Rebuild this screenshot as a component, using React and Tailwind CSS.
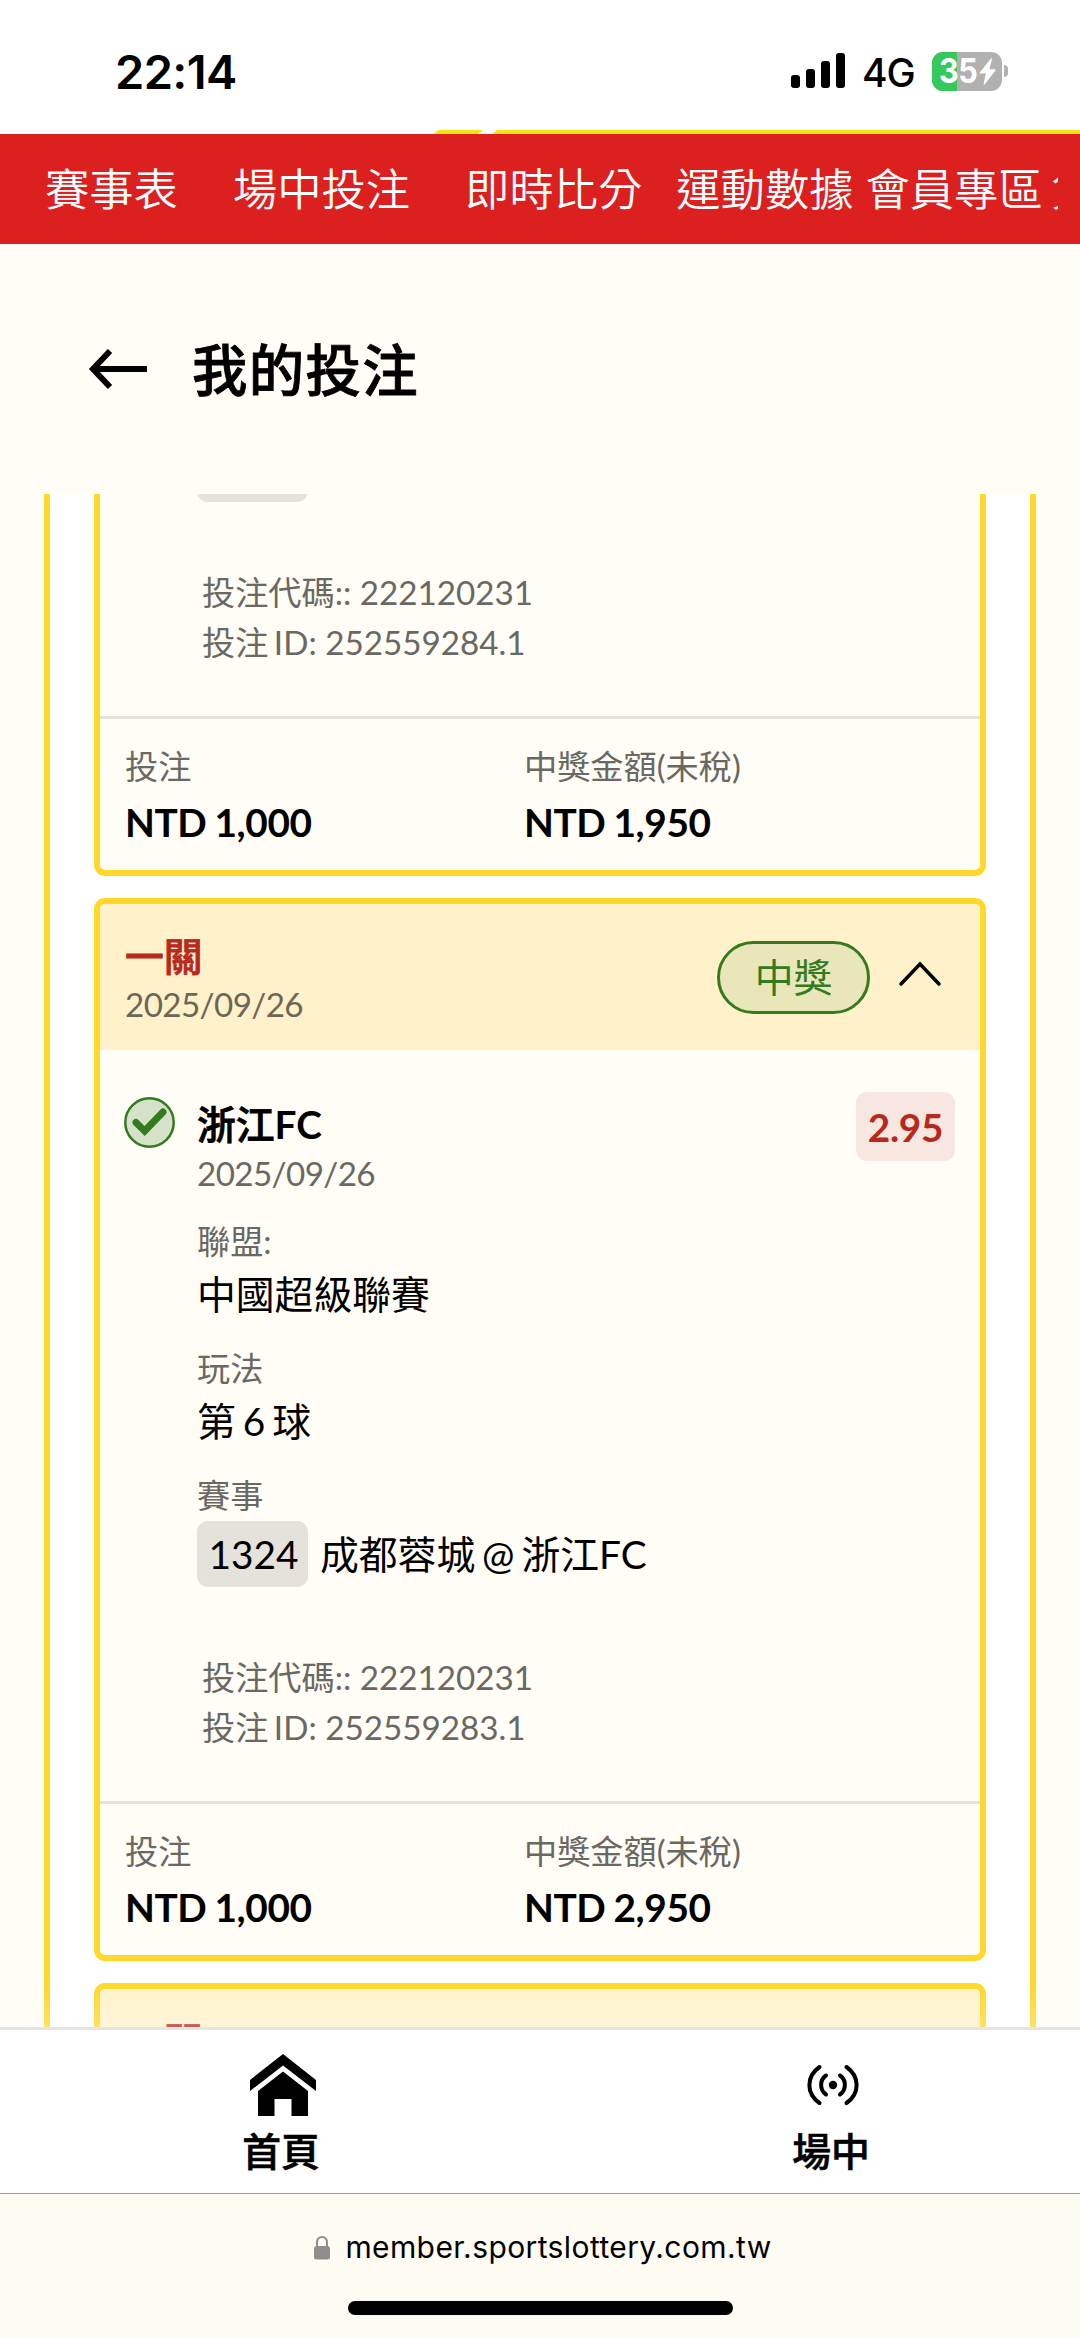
import React from "react";

const navItems = [
  { label: "賽事表", className: "mr-[55px]" },
  { label: "場中投注", className: "mr-[55px]" },
  { label: "即時比分", className: "mr-[34px]" },
  { label: "運動數據", className: "mr-3" },
  { label: "會員專區", className: "mr-2" },
  { label: "負責任", className: "" },
];

function StatusBar() {
  return (
    <div className="relative h-[134px] shrink-0 bg-white font-[Inter,sans-serif]">
      <div className="flex h-[134px] items-start justify-between pl-[115px] pr-[72px]">
        <span className="mt-[44px] text-[47px] leading-[56px] font-semibold tracking-[-0.6px]">22:14</span>
        <div className="mt-[50px] flex h-[42px] items-center">
          <svg width="54" height="36" viewBox="0 0 54 36">
            <rect x="0" y="22" width="9" height="13" rx="3" />
            <rect x="15" y="16" width="9" height="19" rx="3" />
            <rect x="30" y="8" width="9" height="27" rx="3" />
            <rect x="45" y="0" width="9" height="35" rx="3" />
          </svg>
          <span className="mt-1 ml-[17px] w-[70px] text-[39px] leading-[42px] font-medium tracking-[-1px]">4G</span>
          <div className="relative flex h-[39px] w-[70px] items-center overflow-hidden rounded-[11px] bg-[#b1b1b1]">
            <div className="absolute inset-y-0 left-0 w-[25px] bg-[#36c85b]" />
            <span className="relative ml-[7px] w-10 origin-left scale-x-90 text-[34px] leading-[38px] font-bold tracking-[-0.5px] text-white">
              35
            </span>
            <svg className="relative" width="17" height="27" viewBox="0 0 17 27" fill="#fff">
              <path d="M12 0.5 0.8 14.4c-.5.7-.2 1.2.6 1.2h5.4L4.6 26c-.2.8.5 1 1 .4L16.4 12.600c.5-.7.2-1.300-.6-1.300h-5.400L13 1.200C13.200.3 12.500-.1 12 .5Z" />
            </svg>
          </div>
          <div className="ml-0.5 h-3 w-1 rounded-r-full bg-[#b1b1b1]" />
        </div>
      </div>
      {/* bottom edge of the site banner */}
      <svg className="absolute bottom-0 left-[432px]" width="648" height="4" viewBox="0 0 648 4" fill="#fde011">
        <path d="M7 0H51L46 4H1Z" />
        <path d="M65 0H648V4H60Z" />
      </svg>
    </div>
  );
}

function TopNav() {
  return (
    <nav className="flex h-[110px] shrink-0 items-center bg-[#dc1f1f] px-[22px]">
      <div className="flex flex-1 overflow-hidden pl-[23px]">
        {navItems.map((item) => (
          <a
            key={item.label}
            className={`shrink-0 text-[44.3px] leading-[66px] font-[350] whitespace-nowrap text-white ${item.className}`}
          >
            {item.label}
          </a>
        ))}
      </div>
    </nav>
  );
}

function PageTitle() {
  return (
    <header className="flex h-[250px] shrink-0 items-center pl-[88px]">
      <svg width="60" height="42" viewBox="0 0 60 42" fill="none" stroke="#000" strokeWidth="6">
        <path d="M59 21H5M22 3 5 21 22 39" />
      </svg>
      <h1 className="mt-0.5 ml-[44px] text-[55.4px] leading-[80px] font-medium tracking-[1.4px] [-webkit-text-stroke:0.8px_#000]">
        我的投注
      </h1>
    </header>
  );
}

function BetMeta({ code, id }) {
  return (
    <div className="mb-[49px] pl-[102px] text-[33.2px] text-[#696863]">
      <p className="h-[50px] leading-[50px]">投注代碼:: {code}</p>
      <p className="h-[50px] leading-[50px]">
        <span className="[word-spacing:-3px]">投注 ID:</span> {id}
      </p>
    </div>
  );
}

function Amount({ label, value, className }) {
  return (
    <div className={className}>
      <p className="h-[53px] text-[33.2px] leading-[50px] text-[#696863]">{label}</p>
      <p className="h-14 text-[38.8px] leading-[56px] font-bold tracking-[-0.4px] [word-spacing:-1px]">{value}</p>
    </div>
  );
}

function BetFooter({ stake, payout }) {
  return (
    <div className="flex h-[154px] border-t-[3px] border-[#e5e2dc] px-[25px] pt-[22px]">
      <Amount label="投注" value={stake} className="w-[399px]" />
      <Amount label="中獎金額(未稅)" value={payout} className="" />
    </div>
  );
}

function Field({ label, children }) {
  return (
    <div className="mb-[21px]">
      <p className="h-[50px] text-[33.2px] leading-[50px] text-[#696863]">{label}</p>
      <div className="h-14 text-[38.8px] leading-[56px] [word-spacing:-3px]">{children}</div>
    </div>
  );
}

function CheckBadge() {
  return (
    <svg className="mt-[47px] shrink-0" width="51" height="51" viewBox="0 0 51 51">
      <circle cx="25.500" cy="25.500" r="24.200" fill="#d6e1c9" stroke="#347a1f" strokeWidth="2.500" />
      <path d="M12 25.500 20.700 34 39 15" fill="none" stroke="#347a1f" strokeWidth="7" strokeLinecap="round" />
    </svg>
  );
}

function BetHeader({ status }) {
  return (
    <div className="flex h-[146px] items-start bg-[#fff2ca] pl-[25px] pr-[38px]">
      <div className="mt-[26px] flex-1">
        <p className="h-[52px] text-[38.8px] leading-[52px] font-medium text-[#b8281c] [-webkit-text-stroke:0.8px_#b8281c]">
          一關
        </p>
        <p className="h-11 text-[33.2px] leading-[44px] tracking-[-0.6px] text-[#6b6657]">2025/09/26</p>
      </div>
      {status && (
        <span className="mt-[37px] flex h-[73px] w-[153px] items-center justify-center rounded-full border-3 border-[#347a1f] bg-[#e9e7b9] pb-0.5 text-[38.8px] leading-[56px] text-[#347a1f]">
          {status}
        </span>
      )}
      <svg className="mt-[56px] ml-7" width="44" height="28" viewBox="0 0 44 28" fill="none" stroke="#000" strokeWidth="3.500" strokeLinecap="round">
        <path d="M3 24 22 4 41 24" />
      </svg>
    </div>
  );
}

function BetCard() {
  return (
    <article className="h-[1063px] shrink-0 overflow-hidden rounded-[11px] border-[6px] border-[#ffd829] bg-[#fffdf5]">
      <BetHeader status="中獎" />
      <div className="flex h-[537px] items-start pl-6 pr-[25px]">
        <CheckBadge />
        <div className="ml-[22px] mt-[50px] flex-1">
          <p className="h-12 text-[38.8px] leading-[48px] font-bold">
            <span className="font-medium [-webkit-text-stroke:0.8px_#000]">浙江</span>FC
          </p>
          <p className="mb-[18px] h-[50px] text-[33.2px] leading-[50px] tracking-[-0.6px] text-[#696863]">2025/09/26</p>
          <Field label="聯盟:">中國超級聯賽</Field>
          <Field label="玩法">第 6 球</Field>
          <p className="h-[51px] text-[33.2px] leading-[50px] text-[#696863]">賽事</p>
          <div className="flex h-[66px] items-center text-[38.8px] leading-[56px]">
            <span className="flex h-[66px] w-[111px] items-center justify-center rounded-[11px] bg-[#e5e2dc] pl-0.5">1324</span>
            <span className="ml-3 [word-spacing:-3px]">成都蓉城 @ 浙江FC</span>
          </div>
        </div>
        <span className="mt-[42px] flex h-[69px] w-[99px] items-center justify-center rounded-[11px] bg-[#f8e7e0] pt-0.5 text-[38.8px] font-bold tracking-[-0.3px] text-[#b8281c]">
          2.95
        </span>
      </div>
      <div className="pt-[65px]">
        <BetMeta code="222120231" id="252559283.1" />
      </div>
      <BetFooter stake="NTD 1,000" payout="NTD 2,950" />
    </article>
  );
}

function BetList() {
  return (
    <main className="relative flex h-[1533px] shrink-0 flex-col overflow-hidden px-11">
      <div className="flex h-[1533px] flex-col gap-[22px] border-x-[6px] border-[#ffd829] bg-white px-11">
        {/* tail of the card scrolled under the title */}
        <article className="h-[382px] shrink-0 rounded-b-[11px] border-[6px] border-t-0 border-[#ffd829] bg-[#fffdf5]">
          <div className="mb-[65px] ml-[97px] h-2 w-[111px] overflow-hidden">
            <div className="-mt-[58px] h-[66px] rounded-[11px] bg-[#e5e2dc]" />
          </div>
          <BetMeta code="222120231" id="252559284.1" />
          <BetFooter stake="NTD 1,000" payout="NTD 1,950" />
        </article>
        <BetCard />
        <article className="shrink-0 overflow-hidden rounded-t-[11px] border-[6px] border-[#ffd829]">
          <BetHeader />
        </article>
      </div>
      <div className="absolute inset-x-0 bottom-0 h-11 bg-gradient-to-b from-white/0 to-white/25" />
    </main>
  );
}

function TabBar() {
  return (
    <nav className="flex h-[167px] shrink-0 border-t-[3px] border-b border-t-[#e5e5e5] border-b-[#9c9c9c] bg-white pl-[6px]">
      <a className="flex w-[550px] shrink-0 flex-col items-center">
        <svg className="mt-6 ml-[3px]" width="68" height="62" viewBox="0 0 68 62">
          <path d="M34 0 67 26V37L34 11.500 1 37V26Z" />
          <path d="M34 17.500 59 37V62H42.500V45H25.500V62H9V37Z" />
        </svg>
        <span className="mt-[7px] text-[38.8px] leading-[56px] font-medium [-webkit-text-stroke:0.6px_#000]">首頁</span>
      </a>
      <a className="flex w-[550px] shrink-0 flex-col items-center">
        <svg className="mt-[33px] ml-1" width="54" height="44" viewBox="0 0 54 44" fill="none" stroke="#000" strokeWidth="4" strokeLinecap="round">
          <circle cx="27" cy="22" r="4.200" fill="#000" stroke="none" />
          <path d="M20 12.500C13.500 17 13.500 27 20 31.500M34 12.500C40.500 17 40.500 27 34 31.500" />
          <path d="M13.500 4C0 13.500 0 30.500 13.500 40M40.500 4C54 13.500 54 30.500 40.500 40" />
        </svg>
        <span className="mt-4 text-[38.8px] leading-[56px] font-medium [-webkit-text-stroke:0.6px_#000]">場中</span>
      </a>
    </nav>
  );
}

function UrlBar() {
  return (
    <footer className="flex flex-1 flex-col items-center bg-[#fefbf3]">
      <div className="mt-[29px] ml-[5px] flex h-12 items-center font-[Inter,sans-serif]">
        <svg width="18" height="25" viewBox="0 0 18 25">
          <path d="M4 12V7.500C4 0 14 0 14 7.500V12" fill="none" stroke="#8e8e8e" strokeWidth="2" />
          <rect x="1" y="11" width="16" height="13.500" rx="2.500" fill="#8e8e8e" />
        </svg>
        <span className="ml-[14px] text-[30px] leading-[48px] tracking-[0.4px] whitespace-nowrap">
          member.sportslottery.com.tw
        </span>
      </div>
      <div className="mt-[30px] h-[14px] w-[385px] rounded-full bg-black" />
    </footer>
  );
}

export default function App() {
  return (
    <div className="flex h-[2337px] w-[1080px] flex-col overflow-hidden bg-[#fffdf5] font-[Lato,'Noto_Sans_CJK_TC',sans-serif] text-black">
      <StatusBar />
      <TopNav />
      <PageTitle />
      <BetList />
      <TabBar />
      <UrlBar />
    </div>
  );
}
